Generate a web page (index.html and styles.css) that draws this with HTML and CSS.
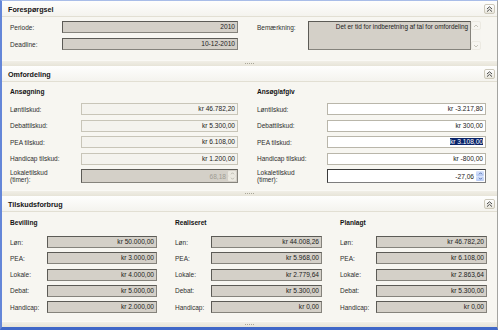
FILE: index.html
```html
<!DOCTYPE html>
<html lang="da">
<head>
    <meta charset="UTF-8">
    <meta name="viewport" content="width=device-width, initial-scale=1.0">
    <title>Omfordeling</title>
    <link rel="stylesheet" href="styles.css">
</head>
<body>
<div class="window">

    <section class="panel">
        <div class="panel-head">
            <span>Forespørgsel</span>
            <span class="collapse"><svg viewBox="0 0 7 6" width="7" height="6"><path d="M1 3 L3.5 0.8 L6 3 M1 5.6 L3.5 3.4 L6 5.6"/></svg></span>
        </div>
        <div class="panel-body request">
            <div class="req-left">
                <div class="row"><span class="label">Periode:</span><div class="field ro">2010</div></div>
                <div class="row"><span class="label">Deadline:</span><div class="field ro">10-12-2010</div></div>
            </div>
            <div class="req-right">
                <span class="label">Bemærkning:</span>
                <div class="memo">Det er tid for indberetning af tal for omfordeling</div>
                <div class="scrollbar">
                    <span class="sb-btn"><svg viewBox="0 0 6 4" width="6" height="4"><path d="M1 3 L3 1 L5 3"/></svg></span>
                    <span class="sb-btn"><svg viewBox="0 0 6 4" width="6" height="4"><path d="M1 1 L3 3 L5 1"/></svg></span>
                </div>
            </div>
        </div>
    </section>

    <div class="splitter"><span class="grip"></span></div>

    <section class="panel">
        <div class="panel-head">
            <span>Omfordeling</span>
            <span class="collapse"><svg viewBox="0 0 7 6" width="7" height="6"><path d="M1 3 L3.5 0.8 L6 3 M1 5.6 L3.5 3.4 L6 5.6"/></svg></span>
        </div>
        <div class="panel-body realloc">
            <div class="col">
                <div class="col-title">Ansøgning</div>
                <div class="rows">
                    <div class="row"><span class="label">Løntilskud:</span><div class="field soft">kr 46.782,20</div></div>
                    <div class="row"><span class="label">Debattilskud:</span><div class="field soft">kr 5.300,00</div></div>
                    <div class="row"><span class="label">PEA tilskud:</span><div class="field soft">kr 6.108,00</div></div>
                    <div class="row"><span class="label">Handicap tilskud:</span><div class="field soft">kr 1.200,00</div></div>
                    <div class="row tall"><span class="label">Lokaletilskud<br>(timer):</span>
                        <div class="spin spin-off">
                            <span class="spin-val">68,18</span>
                            <span class="spin-btns">
                                <span class="spin-btn"><svg viewBox="0 0 6 4" width="5" height="3"><path d="M1 3 L3 1 L5 3"/></svg></span>
                                <span class="spin-btn"><svg viewBox="0 0 6 4" width="5" height="3"><path d="M1 1 L3 3 L5 1"/></svg></span>
                            </span>
                        </div>
                    </div>
                </div>
            </div>
            <div class="col">
                <div class="col-title">Ansøg/afgiv</div>
                <div class="rows">
                    <div class="row"><span class="label">Løntilskud:</span><div class="field edit">kr -3.217,80</div></div>
                    <div class="row"><span class="label">Debattilskud:</span><div class="field edit">kr 300,00</div></div>
                    <div class="row"><span class="label">PEA tilskud:</span><div class="field edit"><span class="selected">kr 3.108,00</span></div></div>
                    <div class="row"><span class="label">Handicap tilskud:</span><div class="field edit">kr -800,00</div></div>
                    <div class="row tall"><span class="label">Lokaletilskud<br>(timer):</span>
                        <div class="spin spin-on">
                            <span class="spin-val">-27,06</span>
                            <span class="spin-btns">
                                <span class="spin-btn"><svg viewBox="0 0 6 4" width="5" height="3"><path d="M1 3 L3 1 L5 3"/></svg></span>
                                <span class="spin-btn"><svg viewBox="0 0 6 4" width="5" height="3"><path d="M1 1 L3 3 L5 1"/></svg></span>
                            </span>
                        </div>
                    </div>
                </div>
            </div>
        </div>
    </section>

    <div class="splitter"><span class="grip"></span></div>

    <section class="panel grow">
        <div class="panel-head">
            <span>Tilskudsforbrug</span>
            <span class="collapse"><svg viewBox="0 0 7 6" width="7" height="6"><path d="M1 3 L3.5 0.8 L6 3 M1 5.6 L3.5 3.4 L6 5.6"/></svg></span>
        </div>
        <div class="panel-body usage">
            <div class="col">
                <div class="col-title">Bevilling</div>
                <div class="rows">
                    <div class="row"><span class="label">Løn:</span><div class="field ro">kr 50.000,00</div></div>
                    <div class="row"><span class="label">PEA:</span><div class="field ro">kr 3.000,00</div></div>
                    <div class="row"><span class="label">Lokale:</span><div class="field ro">kr 4.000,00</div></div>
                    <div class="row"><span class="label">Debat:</span><div class="field ro">kr 5.000,00</div></div>
                    <div class="row"><span class="label">Handicap:</span><div class="field ro">kr 2.000,00</div></div>
                </div>
            </div>
            <div class="col">
                <div class="col-title">Realiseret</div>
                <div class="rows">
                    <div class="row"><span class="label">Løn:</span><div class="field ro">kr 44.008,26</div></div>
                    <div class="row"><span class="label">PEA:</span><div class="field ro">kr 5.968,00</div></div>
                    <div class="row"><span class="label">Lokale:</span><div class="field ro">kr 2.779,64</div></div>
                    <div class="row"><span class="label">Debat:</span><div class="field ro">kr 5.300,00</div></div>
                    <div class="row"><span class="label">Handicap:</span><div class="field ro">kr 0,00</div></div>
                </div>
            </div>
            <div class="col">
                <div class="col-title">Planlagt</div>
                <div class="rows">
                    <div class="row"><span class="label">Løn:</span><div class="field ro">kr 46.782,20</div></div>
                    <div class="row"><span class="label">PEA:</span><div class="field ro">kr 6.108,00</div></div>
                    <div class="row"><span class="label">Lokale:</span><div class="field ro">kr 2.863,64</div></div>
                    <div class="row"><span class="label">Debat:</span><div class="field ro">kr 5.300,00</div></div>
                    <div class="row"><span class="label">Handicap:</span><div class="field ro">kr 0,00</div></div>
                </div>
            </div>
        </div>
    </section>

    <div class="splitter"><span class="grip"></span></div>
</div>
</body>
</html>
```

FILE: styles.css
```css
body {
    margin: 0;
    font-family: "Liberation Sans", Arial, sans-serif;
    font-size: 6.5px;
    color: #2e2e2e;
}

.window {
    width: 498px;
    height: 330px;
    box-sizing: border-box;
    border-top: 1px solid #a9bde8;
    border-left: 2px solid #6486d8;
    border-right: 1px solid #a4a4a0;
    border-bottom: 3px solid #4068c8;
    background-color: #f7f6f1;
    display: flex;
    flex-direction: column;
    overflow: hidden;
}

.panel {
    display: flex;
    flex-direction: column;
}

.panel.grow {
    flex: 1;
}

.panel-head {
    height: 16px;
    box-sizing: border-box;
    display: flex;
    align-items: center;
    justify-content: space-between;
    padding: 1px 2px 0 6px;
    background: linear-gradient(#fefefd, #f4f3ee);
    border-bottom: 1px solid #e2dfd3;
    font-weight: bold;
    font-size: 7.2px;
    color: #141414;
}

.collapse {
    width: 11px;
    height: 10px;
    box-sizing: border-box;
    border: 1px solid #cdc9bb;
    border-radius: 2px;
    background: linear-gradient(#ffffff, #e8e6dc);
    display: flex;
    align-items: center;
    justify-content: center;
}

.collapse path {
    fill: none;
    stroke: #4a4a4a;
    stroke-width: 1;
}

.splitter {
    height: 6px;
    background: linear-gradient(#f1efe7, #e7e4d8);
    border-top: 1px solid #faf9f5;
    box-sizing: border-box;
    display: flex;
    justify-content: center;
    align-items: center;
}

.grip {
    width: 9px;
    height: 1px;
    background: repeating-linear-gradient(90deg, #a9a698 0 1px, transparent 1px 2px);
}

.row {
    display: flex;
    align-items: center;
    height: 12px;
}

.row.tall {
    height: 14px;
}

.label {
    flex: none;
    line-height: 7px;
    white-space: nowrap;
}

.field {
    flex: 1;
    height: 12px;
    box-sizing: border-box;
    line-height: 10px;
    text-align: right;
    padding-right: 2px;
    font-size: 6.6px;
    white-space: nowrap;
    overflow: hidden;
    color: #222;
}

.ro {
    background-color: #d4d0c8;
    border: 1px solid;
    border-color: #5c5b56 #85837c #85837c #5c5b56;
}

.soft {
    background-color: #f4f3ee;
    border: 1px solid #c8c5b8;
}

.edit {
    background-color: #ffffff;
    border: 1px solid #b9b6aa;
}

.selected {
    background-color: #0a246a;
    color: #ffffff;
}

/* Forespørgsel */
.request {
    height: 43px;
    box-sizing: border-box;
    padding: 4px 0 0 8px;
    display: flex;
    gap: 19px;
}

.req-left {
    width: 228px;
    display: flex;
    flex-direction: column;
    gap: 5px;
}

.req-left .label {
    width: 52px;
}

.req-right {
    display: flex;
    align-items: flex-start;
}

.req-right .label {
    width: 51px;
    padding-top: 3px;
}

.memo {
    width: 163px;
    height: 29px;
    box-sizing: border-box;
    background-color: #d4d0c8;
    border: 1px solid;
    border-color: #5c5b56 #85837c #85837c #5c5b56;
    text-align: right;
    padding: 1px 2px 0 0;
    font-size: 6.4px;
    line-height: 8px;
    white-space: nowrap;
    color: #222;
}

.scrollbar {
    width: 10px;
    height: 29px;
    display: flex;
    flex-direction: column;
    justify-content: space-between;
    background-color: #f6f5f0;
}

.sb-btn {
    height: 9px;
    display: flex;
    align-items: center;
    justify-content: center;
    border: 1px solid #eceae2;
    border-radius: 2px;
    box-sizing: border-box;
}

.sb-btn path {
    fill: none;
    stroke: #c4c2b8;
    stroke-width: 1;
}

/* Omfordeling */
.realloc {
    height: 108px;
    box-sizing: border-box;
    padding: 5px 0 0 8px;
    display: grid;
    grid-template-columns: 228px 229px;
    column-gap: 19px;
}

.col-title {
    height: 10px;
    line-height: 10px;
    font-weight: bold;
    font-size: 6.6px;
    color: #141414;
    margin-bottom: 6px;
}

.rows {
    display: flex;
    flex-direction: column;
    gap: 4.5px;
}

.realloc .col:first-child .label {
    width: 71px;
}

.realloc .col:last-child .label {
    width: 70px;
}

.spin {
    flex: 1;
    height: 14px;
    box-sizing: border-box;
    display: flex;
    align-items: center;
    border: 1px solid;
    font-size: 6.6px;
}

.spin-val {
    flex: 1;
    text-align: right;
    padding-right: 2px;
}

.spin-btns {
    width: 8px;
    height: 10px;
    margin-right: 1px;
    display: flex;
    flex-direction: column;
    gap: 0;
}

.spin-btn {
    flex: 1;
    display: flex;
    align-items: center;
    justify-content: center;
    border-radius: 1px;
}

.spin-btn path {
    fill: none;
    stroke-width: 1.2;
}

.spin-off {
    background-color: #d4d0c8;
    border-color: #5c5b56 #85837c #85837c #5c5b56;
    color: #9f9c93;
}

.spin-off .spin-btn {
    background-color: #ebe9e1;
}

.spin-off .spin-btn path {
    stroke: #b7b5ac;
}

.spin-on {
    background-color: #ffffff;
    border-color: #3b3b3b #7d7d7d #7d7d7d #3b3b3b;
    color: #222;
}

.spin-on .spin-btn {
    background: linear-gradient(#dce6fc, #b8cbf4);
}

.spin-on .spin-btn path {
    stroke: #4d6aa8;
}

/* Tilskudsforbrug */
.usage {
    flex: 1;
    box-sizing: border-box;
    padding: 6px 0 0 8px;
    display: grid;
    grid-template-columns: 147px 147px 147px;
    column-gap: 18px;
}

.usage .col-title {
    margin-bottom: 8px;
}

.usage .rows {
    gap: 4.3px;
}

.usage .col:first-child .label {
    width: 37px;
}

.usage .label {
    width: 36px;
}
```
